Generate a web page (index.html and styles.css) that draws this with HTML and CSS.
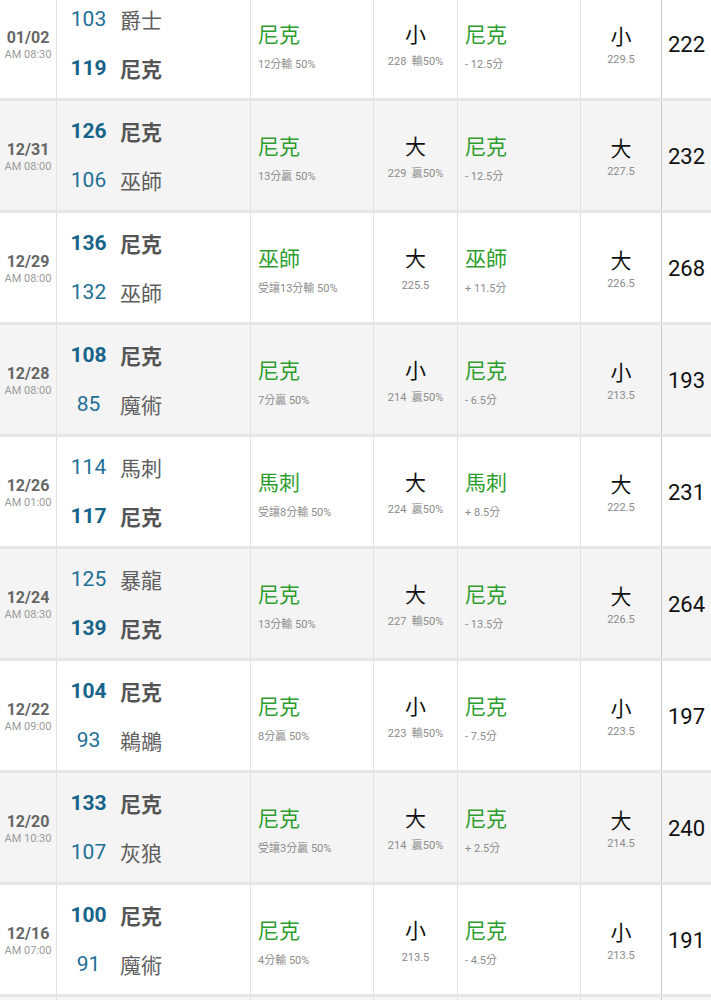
FILE: index.html
```html
<!DOCTYPE html>
<html lang="zh-Hant">
<head>
<meta charset="utf-8">
<title>尼克 賽果</title>
<link rel="stylesheet" href="styles.css">
</head>
<body>
<div class="table">
  <div class="row">
    <div class="cell date"><b>01/02</b><span>AM 08:30</span></div>
    <div class="cell score"><div class="line"><span class="pts">103</span><span class="team">爵士</span></div><div class="line win"><span class="pts">119</span><span class="team">尼克</span></div></div>
    <div class="cell pick"><div class="main">尼克</div><div class="sub">12分輸 50%</div></div>
    <div class="cell ou"><div class="main">小</div><div class="sub">228&nbsp; 輸50%</div></div>
    <div class="cell pick2"><div class="main">尼克</div><div class="sub">- 12.5分</div></div>
    <div class="cell ou2"><div class="main">小</div><div class="sub">229.5</div></div>
    <div class="cell total">222</div>
  </div>
  <div class="row alt">
    <div class="cell date"><b>12/31</b><span>AM 08:00</span></div>
    <div class="cell score"><div class="line win"><span class="pts">126</span><span class="team">尼克</span></div><div class="line"><span class="pts">106</span><span class="team">巫師</span></div></div>
    <div class="cell pick"><div class="main">尼克</div><div class="sub">13分贏 50%</div></div>
    <div class="cell ou"><div class="main">大</div><div class="sub">229&nbsp; 贏50%</div></div>
    <div class="cell pick2"><div class="main">尼克</div><div class="sub">- 12.5分</div></div>
    <div class="cell ou2"><div class="main">大</div><div class="sub">227.5</div></div>
    <div class="cell total">232</div>
  </div>
  <div class="row">
    <div class="cell date"><b>12/29</b><span>AM 08:00</span></div>
    <div class="cell score"><div class="line win"><span class="pts">136</span><span class="team">尼克</span></div><div class="line"><span class="pts">132</span><span class="team">巫師</span></div></div>
    <div class="cell pick"><div class="main">巫師</div><div class="sub">受讓13分輸 50%</div></div>
    <div class="cell ou"><div class="main">大</div><div class="sub">225.5</div></div>
    <div class="cell pick2"><div class="main">巫師</div><div class="sub">+ 11.5分</div></div>
    <div class="cell ou2"><div class="main">大</div><div class="sub">226.5</div></div>
    <div class="cell total">268</div>
  </div>
  <div class="row alt">
    <div class="cell date"><b>12/28</b><span>AM 08:00</span></div>
    <div class="cell score"><div class="line win"><span class="pts">108</span><span class="team">尼克</span></div><div class="line"><span class="pts">85</span><span class="team">魔術</span></div></div>
    <div class="cell pick"><div class="main">尼克</div><div class="sub">7分贏 50%</div></div>
    <div class="cell ou"><div class="main">小</div><div class="sub">214&nbsp; 贏50%</div></div>
    <div class="cell pick2"><div class="main">尼克</div><div class="sub">- 6.5分</div></div>
    <div class="cell ou2"><div class="main">小</div><div class="sub">213.5</div></div>
    <div class="cell total">193</div>
  </div>
  <div class="row">
    <div class="cell date"><b>12/26</b><span>AM 01:00</span></div>
    <div class="cell score"><div class="line"><span class="pts">114</span><span class="team">馬刺</span></div><div class="line win"><span class="pts">117</span><span class="team">尼克</span></div></div>
    <div class="cell pick"><div class="main">馬刺</div><div class="sub">受讓8分輸 50%</div></div>
    <div class="cell ou"><div class="main">大</div><div class="sub">224&nbsp; 贏50%</div></div>
    <div class="cell pick2"><div class="main">馬刺</div><div class="sub">+ 8.5分</div></div>
    <div class="cell ou2"><div class="main">大</div><div class="sub">222.5</div></div>
    <div class="cell total">231</div>
  </div>
  <div class="row alt">
    <div class="cell date"><b>12/24</b><span>AM 08:30</span></div>
    <div class="cell score"><div class="line"><span class="pts">125</span><span class="team">暴龍</span></div><div class="line win"><span class="pts">139</span><span class="team">尼克</span></div></div>
    <div class="cell pick"><div class="main">尼克</div><div class="sub">13分輸 50%</div></div>
    <div class="cell ou"><div class="main">大</div><div class="sub">227&nbsp; 輸50%</div></div>
    <div class="cell pick2"><div class="main">尼克</div><div class="sub">- 13.5分</div></div>
    <div class="cell ou2"><div class="main">大</div><div class="sub">226.5</div></div>
    <div class="cell total">264</div>
  </div>
  <div class="row">
    <div class="cell date"><b>12/22</b><span>AM 09:00</span></div>
    <div class="cell score"><div class="line win"><span class="pts">104</span><span class="team">尼克</span></div><div class="line"><span class="pts">93</span><span class="team">鵜鶘</span></div></div>
    <div class="cell pick"><div class="main">尼克</div><div class="sub">8分贏 50%</div></div>
    <div class="cell ou"><div class="main">小</div><div class="sub">223&nbsp; 輸50%</div></div>
    <div class="cell pick2"><div class="main">尼克</div><div class="sub">- 7.5分</div></div>
    <div class="cell ou2"><div class="main">小</div><div class="sub">223.5</div></div>
    <div class="cell total">197</div>
  </div>
  <div class="row alt">
    <div class="cell date"><b>12/20</b><span>AM 10:30</span></div>
    <div class="cell score"><div class="line win"><span class="pts">133</span><span class="team">尼克</span></div><div class="line"><span class="pts">107</span><span class="team">灰狼</span></div></div>
    <div class="cell pick"><div class="main">尼克</div><div class="sub">受讓3分贏 50%</div></div>
    <div class="cell ou"><div class="main">大</div><div class="sub">214&nbsp; 贏50%</div></div>
    <div class="cell pick2"><div class="main">尼克</div><div class="sub">+ 2.5分</div></div>
    <div class="cell ou2"><div class="main">大</div><div class="sub">214.5</div></div>
    <div class="cell total">240</div>
  </div>
  <div class="row">
    <div class="cell date"><b>12/16</b><span>AM 07:00</span></div>
    <div class="cell score"><div class="line win"><span class="pts">100</span><span class="team">尼克</span></div><div class="line"><span class="pts">91</span><span class="team">魔術</span></div></div>
    <div class="cell pick"><div class="main">尼克</div><div class="sub">4分輸 50%</div></div>
    <div class="cell ou"><div class="main">小</div><div class="sub">213.5</div></div>
    <div class="cell pick2"><div class="main">尼克</div><div class="sub">- 4.5分</div></div>
    <div class="cell ou2"><div class="main">小</div><div class="sub">213.5</div></div>
    <div class="cell total">191</div>
  </div>
  <div class="row alt">
    <div class="cell date"></div>
    <div class="cell score"></div>
    <div class="cell pick"></div>
    <div class="cell ou"></div>
    <div class="cell pick2"></div>
    <div class="cell ou2"></div>
    <div class="cell total"></div>
  </div>
</div>
</body>
</html>
```

FILE: styles.css
```css
html, body {
  margin: 0;
  padding: 0;
  background: #ffffff;
}
body {
  font-family: Roboto, "Noto Sans CJK TC", "Noto Sans", sans-serif;
  overflow: hidden;
  height: 1000px;
}
.table {
  margin-top: -11px;
  width: 711px;
}
.row {
  display: grid;
  grid-template-columns: 57px 194px 123px 84px 123px 81px 49px;
  height: 109px;
  border-bottom: 3px solid #e6e6e6;
  background: #ffffff;
}
.row.alt {
  background: #f4f4f4;
}
.cell {
  border-right: 1px solid #e2e2e2;
  display: flex;
  flex-direction: column;
  justify-content: center;
  min-width: 0;
  box-sizing: border-box;
}
.cell.ou2 {
  border-right: 1px solid #c8c8c8;
}
.cell.total {
  border-right: none;
}
.date {
  align-items: center;
  padding-top: 4px;
}
.date b {
  font-size: 16px;
  font-weight: 700;
  color: #666666;
  line-height: 18px;
}
.date span {
  font-size: 11px;
  color: #9a9a9a;
  line-height: 14px;
  margin-top: 1px;
}
.score {
  gap: 3px;
}
.line {
  display: flex;
  align-items: center;
  height: 46px;
}
.pts {
  width: 63px;
  text-align: center;
  font-size: 21px;
  color: #1e6f96;
}
.team {
  font-size: 21px;
  color: #5e5e5e;
}
.line.win .pts {
  font-weight: 700;
  color: #17648a;
}
.line.win .team {
  font-weight: 700;
  color: #555555;
}
.pick, .pick2 {
  padding-left: 7px;
  padding-top: 5px;
}
.main {
  font-size: 21px;
  line-height: 28px;
}
.pick .main, .pick2 .main {
  color: #2f9d2f;
}
.sub {
  font-size: 11px;
  color: #8c8c8c;
  line-height: 14px;
}
.pick .sub, .pick2 .sub {
  margin-top: 9px;
}
.ou, .ou2 {
  align-items: center;
}
.ou .main, .ou2 .main {
  color: #111111;
}
.ou {
  padding-top: 2px;
}
.ou .sub {
  margin-top: 6px;
}
.ou2 {
  padding-top: 3px;
}
.ou2 .sub {
  margin-top: 2px;
}
.total {
  padding-left: 6px;
  font-size: 22px;
  color: #111111;
  padding-top: 2px;
}
```
